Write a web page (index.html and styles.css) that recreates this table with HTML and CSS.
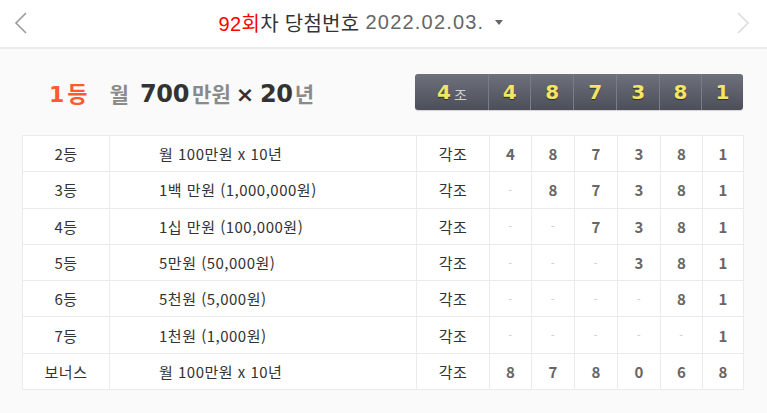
FILE: index.html
```html
<!DOCTYPE html>
<html lang="ko">
<head>
<meta charset="utf-8">
<link rel="stylesheet" href="styles.css">
</head>
<body>
<header class="topbar">
  <button class="nav prev" aria-label="이전">
    <svg width="14" height="22" viewBox="0 0 14 22"><path d="M12 1 L2 11 L12 21" fill="none" stroke="#9a9a9a" stroke-width="1.6"/></svg>
  </button>
  <h1 class="title"><span class="red">92회</span>차 당첨번호 <span class="date">2022.02.03.</span><span class="caret"></span></h1>
  <button class="nav next" aria-label="다음">
    <svg width="14" height="22" viewBox="0 0 14 22"><path d="M2 1 L12 11 L2 21" fill="none" stroke="#dcdcdc" stroke-width="1.6"/></svg>
  </button>
</header>
<main class="content">
  <section class="first">
    <div class="prize"><span class="rank"><b>1</b>등</span><span class="sub won">월</span><span class="big n700">700</span><span class="sub">만원</span><span class="big x">×</span><span class="big n20">20</span><span class="sub">년</span></div>
    <div class="balls">
      <div class="ball jo">4<small>조</small></div>
      <div class="ball w42">4</div>
      <div class="ball">8</div>
      <div class="ball">7</div>
      <div class="ball">3</div>
      <div class="ball w42">8</div>
      <div class="ball w42">1</div>
    </div>
  </section>
  <table class="ranks">
    <colgroup><col class="c1"><col class="c2"><col class="c3"><col class="c42"><col class="c43"><col class="c43"><col class="c43"><col class="c42"><col class="cl"></colgroup>
    <tbody>
      <tr><td>2등</td><td class="amt">월 100만원 x 10년</td><td>각조</td><td class="n">4</td><td class="n">8</td><td class="n">7</td><td class="n">3</td><td class="n">8</td><td class="n">1</td></tr>
      <tr><td>3등</td><td class="amt">1백 만원 (1,000,000원)</td><td>각조</td><td class="d">-</td><td class="n">8</td><td class="n">7</td><td class="n">3</td><td class="n">8</td><td class="n">1</td></tr>
      <tr><td>4등</td><td class="amt">1십 만원 (100,000원)</td><td>각조</td><td class="d">-</td><td class="d">-</td><td class="n">7</td><td class="n">3</td><td class="n">8</td><td class="n">1</td></tr>
      <tr><td>5등</td><td class="amt">5만원 (50,000원)</td><td>각조</td><td class="d">-</td><td class="d">-</td><td class="d">-</td><td class="n">3</td><td class="n">8</td><td class="n">1</td></tr>
      <tr><td>6등</td><td class="amt">5천원 (5,000원)</td><td>각조</td><td class="d">-</td><td class="d">-</td><td class="d">-</td><td class="d">-</td><td class="n">8</td><td class="n">1</td></tr>
      <tr><td>7등</td><td class="amt">1천원 (1,000원)</td><td>각조</td><td class="d">-</td><td class="d">-</td><td class="d">-</td><td class="d">-</td><td class="d">-</td><td class="n">1</td></tr>
      <tr><td>보너스</td><td class="amt">월 100만원 x 10년</td><td>각조</td><td class="n">8</td><td class="n">7</td><td class="n">8</td><td class="n">0</td><td class="n">6</td><td class="n">8</td></tr>
    </tbody>
  </table>
</main>
</body>
</html>
```
FILE: styles.css
```css
* { box-sizing: border-box; }
html, body { margin: 0; padding: 0; }
body {
  background: #fafafa;
  font-family: "Noto Sans CJK KR", "Liberation Sans", sans-serif;
  color: #333;
  width: 767px;
  height: 413px;
  overflow: hidden;
}
.topbar {
  height: 49px;
  background: #fff;
  border-bottom: 2px solid #ebebeb;
  display: flex;
  align-items: center;
  justify-content: space-between;
  padding: 0 17px 2px 14px;
}
.nav {
  background: none;
  border: 0;
  padding: 0;
  width: 14px;
  height: 22px;
  display: flex;
}
.title {
  margin: 0 42px 0 0;
  font-family: "Liberation Sans", "Noto Sans CJK KR", sans-serif;
  font-weight: normal;
  font-size: 20px;
  color: #333;
  display: flex;
  align-items: center;
  letter-spacing: 0.3px;
}
.title .red { color: #f00; }
.title .date { color: #666; margin-left: 6px; letter-spacing: 1.2px; }
.caret {
  display: inline-block;
  margin-left: 11px;
  width: 0; height: 0;
  border-left: 4.5px solid transparent;
  border-right: 4.5px solid transparent;
  border-top: 5px solid #666;
}
.content { padding: 25px 24px 0 22px; }
.first {
  display: flex;
  align-items: center;
  height: 36px;
  margin-bottom: 25px;
}
.prize {
  width: 394px;
  padding-left: 27px;
  display: flex;
  align-items: baseline;
  font-family: "Noto Sans CJK KR", sans-serif;
  font-weight: bold;
}
.rank { color: #ff5a2a; font-size: 22px; margin-right: 22px; }
.rank b { font-family: "DejaVu Sans", sans-serif; font-size: 22px; margin-right: 3px; }
.sub { color: #8a8a8a; font-size: 21px; }
.won { margin-right: 11px; }
.big {
  color: #333;
  font-family: "DejaVu Sans", sans-serif;
  font-size: 24px;
  letter-spacing: -0.3px;
  margin-right: 3px;
}
.big.x { font-size: 22px; margin: 0 8px 0 5px; }
.big.n20 { margin-left: -2px; margin-right: 2px; }
.balls {
  display: flex;
  height: 36px;
  width: 328px;
  border-radius: 3px;
  background: linear-gradient(#6e717c, #4c4f5a);
  box-shadow: 0 1px 1px rgba(0,0,0,0.15);
  overflow: hidden;
}
.ball {
  width: 43px;
  display: flex;
  align-items: center;
  justify-content: center;
  color: #f6e463;
  font-family: "DejaVu Sans", sans-serif;
  font-weight: bold;
  font-size: 20px;
  text-shadow: 0 1px 1px rgba(0,0,0,0.5);
  border-left: 1px solid #7a7d88;
}
.ball.w42 { width: 42px; }
.ball.jo { width: 73px; border-left: 0; }
.ball.jo small {
  font-family: "Noto Sans CJK KR", sans-serif;
  font-size: 14px;
  font-weight: normal;
  color: #d0d0d0;
  margin-left: 3px;
  margin-top: 3px;
  text-shadow: none;
}
.ranks {
  border-collapse: collapse;
  table-layout: fixed;
  width: 721px;
  background: #fff;
  font-size: 15px;
}
.ranks .c1 { width: 87px; }
.ranks .c2 { width: 307px; }
.ranks .c3 { width: 73px; }
.ranks .c42 { width: 42px; }
.ranks .c43 { width: 43px; }
.ranks .cl { width: 41px; }
.ranks td {
  border: 1px solid #ebebeb;
  height: 36.3px;
  padding: 0;
  text-align: center;
  color: #333;
  letter-spacing: 0.5px;
}
.ranks td.amt { text-align: left; padding-left: 49px; }
.ranks td.n { color: #666; font-weight: bold; font-size: 15px; letter-spacing: 0; }
.ranks td.d { color: #c8c8c8; font-size: 11px; }
```
